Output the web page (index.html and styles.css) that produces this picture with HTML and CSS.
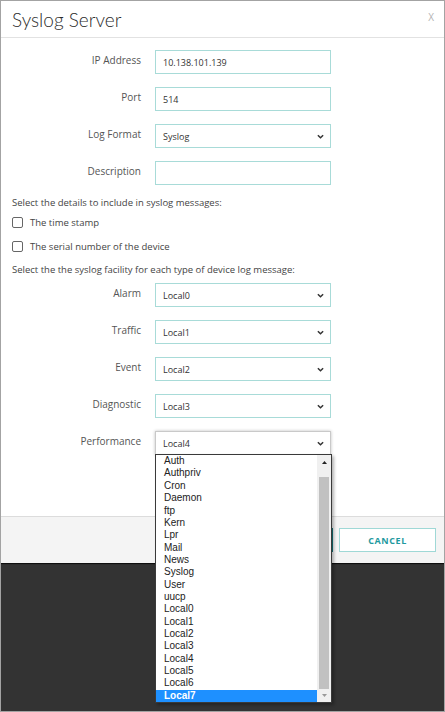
FILE: index.html
```html
<!DOCTYPE html>
<html lang="en">
<head>
<meta charset="utf-8">
<title>Syslog Server</title>
<link rel="stylesheet" href="styles.css">
</head>
<body>
<div class="screen">
  <div class="modal">
    <div class="modal-header">
      <h1 class="title">Syslog Server</h1>
      <span class="close">X</span>
    </div>
    <div class="modal-body">
      <div class="form-grid">
        <div class="label">IP Address</div>
        <div class="field">10.138.101.139</div>
        <div class="label">Port</div>
        <div class="field">514</div>
        <div class="label">Log Format</div>
        <div class="field select"><span>Syslog</span><svg class="chev" viewBox="0 0 8 5" width="7" height="5"><path d="M1 1 L4 4 L7 1" fill="none" stroke="#333" stroke-width="1.7"/></svg></div>
        <div class="label">Description</div>
        <div class="field"></div>
      </div>
      <p class="hint">Select the details to include in syslog messages:</p>
      <div class="check"><span class="box"></span>The time stamp</div>
      <div class="check"><span class="box"></span>The serial number of the device</div>
      <p class="hint hint2">Select the the syslog facility for each type of device log message:</p>
      <div class="form-grid">
        <div class="label">Alarm</div>
        <div class="field select"><span>Local0</span><svg class="chev" viewBox="0 0 8 5" width="7" height="5"><path d="M1 1 L4 4 L7 1" fill="none" stroke="#333" stroke-width="1.7"/></svg></div>
        <div class="label">Traffic</div>
        <div class="field select"><span>Local1</span><svg class="chev" viewBox="0 0 8 5" width="7" height="5"><path d="M1 1 L4 4 L7 1" fill="none" stroke="#333" stroke-width="1.7"/></svg></div>
        <div class="label">Event</div>
        <div class="field select"><span>Local2</span><svg class="chev" viewBox="0 0 8 5" width="7" height="5"><path d="M1 1 L4 4 L7 1" fill="none" stroke="#333" stroke-width="1.7"/></svg></div>
        <div class="label">Diagnostic</div>
        <div class="field select"><span>Local3</span><svg class="chev" viewBox="0 0 8 5" width="7" height="5"><path d="M1 1 L4 4 L7 1" fill="none" stroke="#333" stroke-width="1.7"/></svg></div>
        <div class="label">Performance</div>
        <div class="field select open"><span>Local4</span><svg class="chev" viewBox="0 0 8 5" width="7" height="5"><path d="M1 1 L4 4 L7 1" fill="none" stroke="#333" stroke-width="1.7"/></svg></div>
      </div>
    </div>
    <div class="modal-footer">
      <button class="btn save">SAVE</button>
      <button class="btn cancel">CANCEL</button>
    </div>
  </div>
  <div class="backdrop"></div>

  <div class="dropdown">
    <div class="options">
      <div class="opt">Auth</div>
      <div class="opt">Authpriv</div>
      <div class="opt">Cron</div>
      <div class="opt">Daemon</div>
      <div class="opt">ftp</div>
      <div class="opt">Kern</div>
      <div class="opt">Lpr</div>
      <div class="opt">Mail</div>
      <div class="opt">News</div>
      <div class="opt">Syslog</div>
      <div class="opt">User</div>
      <div class="opt">uucp</div>
      <div class="opt">Local0</div>
      <div class="opt">Local1</div>
      <div class="opt">Local2</div>
      <div class="opt">Local3</div>
      <div class="opt">Local4</div>
      <div class="opt">Local5</div>
      <div class="opt">Local6</div>
      <div class="opt sel">Local7</div>
    </div>
    <div class="scrollbar">
      <div class="sb-btn"><svg viewBox="0 0 5 3" width="5" height="3"><path d="M0 3 L2.5 0 L5 3 Z" fill="#222"/></svg></div>
      <div class="sb-track"><div class="sb-thumb"></div></div>
      <div class="sb-btn down"><svg viewBox="0 0 5 3" width="5" height="3"><path d="M0 0 L2.5 3 L5 0 Z" fill="#999"/></svg></div>
    </div>
  </div>
</div>
</body>
</html>
```

FILE: styles.css
```css
* { box-sizing: border-box; }
html, body { margin: 0; padding: 0; background: #fff; }
body { font-family: "Open Sans", sans-serif; }

.screen {
  position: relative;
  width: 445px;
  height: 712px;
  border: 1px solid #a3a3a3;
  display: flex;
  flex-direction: column;
  overflow: hidden;
}

.modal {
  position: relative;
  z-index: 1;
  background: #fff;
  display: flex;
  flex-direction: column;
  box-shadow: 0 1px 1px rgba(0, 0, 0, 0.7);
}

.modal-header {
  height: 37px;
  border-bottom: 1px solid #e2e2e2;
  display: flex;
  align-items: center;
  justify-content: space-between;
  padding: 0 10px 0 11px;
}
.title {
  margin: 0;
  font-family: Lato, sans-serif;
  font-weight: 300;
  font-size: 19px;
  color: #2b2b2b;
}
.close {
  font-family: "Open Sans", sans-serif;
  font-size: 10px;
  color: #b3b3b3;
  margin-top: -4px;
}

.modal-body {
  padding: 12px 0 61px 0;
}

.form-grid {
  display: grid;
  grid-template-columns: 140px 176px;
  column-gap: 14px;
  row-gap: 13px;
}

.label {
  text-align: right;
  font-size: 10px;
  line-height: 20px;
  color: #555;
}

.field {
  height: 24px;
  border: 1px solid #a8dbd8;
  padding: 0 6px 0 7px;
  display: flex;
  align-items: center;
  justify-content: space-between;
  font-size: 9px;
  color: #333;
}
.field.open {
  border-color: #c9c9c9;
  box-shadow: 0 0 3px rgba(0, 0, 0, 0.25);
}
.chev { display: block; }

.hint {
  margin: 11px 0 0 11px;
  font-size: 9.5px;
  line-height: 14px;
  color: #444;
}
.hint2 {
  margin: 0 0 1px 11px;
  line-height: 24px;
}

.check {
  height: 24px;
  display: flex;
  align-items: center;
  gap: 7px;
  padding-left: 11px;
  font-size: 9.5px;
  color: #444;
}
.box {
  width: 11px;
  height: 11px;
  border: 1px solid #666;
  border-radius: 2px;
  background: #fff;
}

.modal-footer {
  border-top: 1px solid #dcdcdc;
  background: #f4f4f4;
  padding: 11px 8px 11px;
  display: flex;
  justify-content: flex-end;
  gap: 6px;
}
.btn {
  width: 97px;
  height: 24px;
  font-family: "Open Sans", sans-serif;
  font-weight: 700;
  font-size: 9px;
  letter-spacing: 0.6px;
  padding: 0;
}
.save {
  background: #1c9aa0;
  border: 1px solid #15787d;
  color: #fff;
}
.cancel {
  background: #fff;
  border: 1px solid #9fd8d6;
  color: #1f9aa0;
}

.backdrop {
  flex: 1;
  background: #333;
}

.dropdown {
  position: absolute;
  z-index: 2;
  left: 154px;
  top: 453px;
  width: 177px;
  height: 249px;
  border: 1px solid #3a3a3a;
  background: #fff;
  display: flex;
  box-shadow: 2px 2px 3px rgba(0, 0, 0, 0.3);
}
.options {
  flex: 1;
  display: flex;
  flex-direction: column;
  justify-content: flex-end;
  overflow: hidden;
  font-family: "Liberation Sans", Arial, sans-serif;
  font-size: 10px;
  color: #222;
}
.opt {
  flex-shrink: 0;
  height: 12.35px;
  line-height: 12.35px;
  padding-left: 8px;
}
.opt.sel {
  background: #1e90ff;
  color: #fff;
  font-weight: 700;
}

.scrollbar {
  width: 14px;
  background: #f0f0f0;
  display: flex;
  flex-direction: column;
}
.sb-btn {
  height: 14px;
  display: flex;
  align-items: center;
  justify-content: center;
}
.sb-btn svg { display: block; }
.sb-track {
  flex: 1;
  padding: 8px 2px 0 2px;
  display: flex;
}
.sb-thumb {
  flex: 1;
  background: #c1c1c1;
}
.sb-btn.down { height: 13px; }
```
